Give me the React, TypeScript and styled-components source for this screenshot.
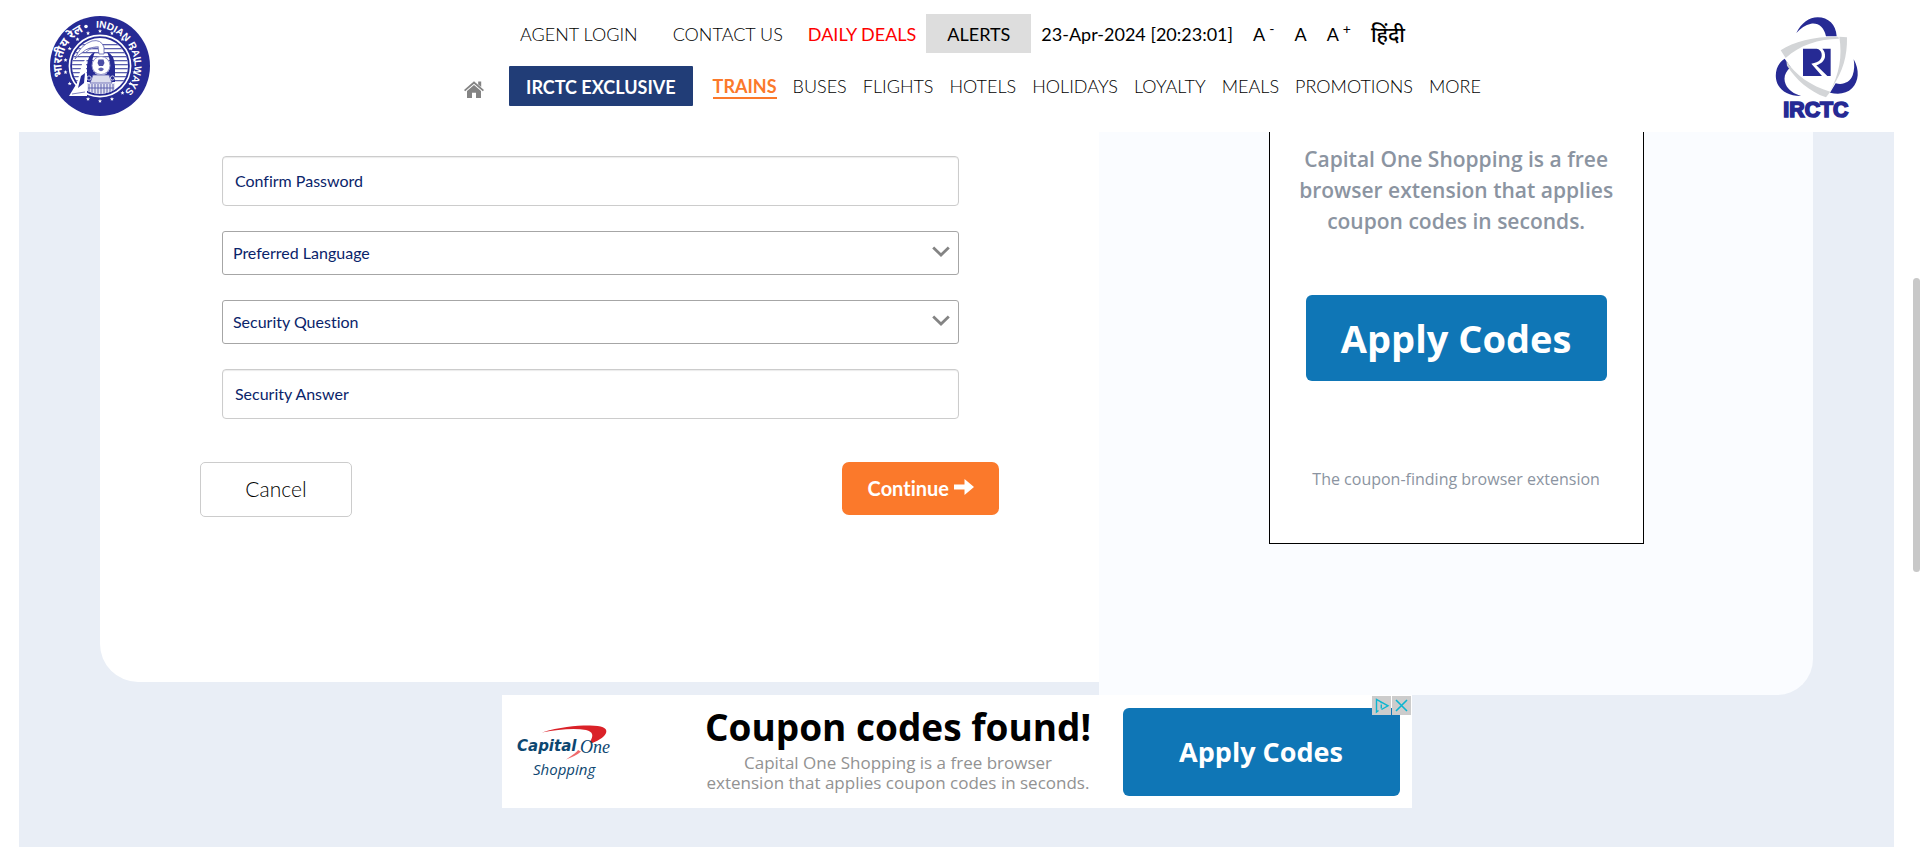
import React from "react";
import styled, { createGlobalStyle, css } from "styled-components";

const Global = createGlobalStyle`
  *, *::before, *::after { box-sizing: border-box; }
  body {
    margin: 0;
    background: #fff;
    color: #000;
    font-family: Lato, "Noto Sans", sans-serif;
    font-variant-ligatures: none;
  }
  button, input, select { font-family: inherit; font-variant-ligatures: none; }
`;

const Page = styled.div`
  display: flex;
  flex-direction: column;
  min-height: 100vh;
`;

const Header = styled.header`
  display: flex;
  align-items: flex-start;
  height: 132px;
  padding: 0 62px 0 50px;
  background: #fff;
`;

const LogoLink = styled.a`
  display: block;
  flex: none;
  padding-top: 16px;
  svg { display: block; overflow: visible; }
`;

const HeaderNav = styled.div`
  flex: 1;
  display: flex;
  flex-direction: column;
  align-items: center;
  gap: 13px;
  padding-top: 14px;
`;

const TopRow = styled.nav`
  display: flex;
  align-items: center;
  height: 39px;
  font-size: 18px;
  white-space: nowrap;
`;

const MainRow = styled.nav`
  display: flex;
  align-items: center;
  height: 40px;
  margin-left: 20px;
  font-size: 18px;
  white-space: nowrap;
`;

const TopLink = styled.a<{ $tone?: "deal" | "language" }>`
  color: #000;
  text-decoration: none;
  font-weight: 300;
  margin-right: 35px;
  ${(p) => p.$tone === "deal" && css`color: #fe0000; font-weight: 400; margin: 0 10px 0 -10px;`}
  ${(p) => p.$tone === "language" && css`font-size: 21px; line-height: 24px; font-weight: 500; margin: 0;`}
`;

const AlertButton = styled.button`
  height: 39px;
  padding: 0 21px;
  margin-right: 10px;
  border: 0;
  background: #ddd;
  color: #000;
  font-size: 18px;
`;

const Clock = styled.time`
  margin-right: 20px;
`;

const SizeButton = styled.button`
  padding: 0;
  margin-right: 20px;
  border: 0;
  background: none;
  color: #000;
  font-size: 18px;
  line-height: 20px;
  sup { font-size: 14px; line-height: 0; margin-left: 4px; }
`;

const HomeLink = styled.a`
  display: flex;
  padding-top: 7px;
  margin-right: 25px;
`;

const Exclusive = styled.a`
  height: 40px;
  padding: 0 17px;
  margin-right: 20px;
  border-radius: 1px;
  background: #213d77;
  color: #fff;
  font-weight: 700;
  line-height: 42px;
  text-decoration: none;
`;

const MenuList = styled.div`
  display: flex;
  gap: 16px;
`;

const MenuLink = styled.a<{ $active?: boolean }>`
  height: 26px;
  line-height: 26px;
  color: ${(p) => (p.$active ? "#fb792b" : "#000")};
  border-bottom: 2px solid ${(p) => (p.$active ? "#fb792b" : "transparent")};
  font-weight: ${(p) => (p.$active ? 700 : 300)};
  text-decoration: none;
`;

const Main = styled.main`
  flex: 1;
  margin: 0 26px 0 19px;
  padding-bottom: 39px;
  background: #e9eef6;
`;

const Columns = styled.div`
  display: grid;
  grid-template-columns: 7fr 5fr;
  margin: 0 81px;
`;

const FormPanel = styled.section`
  margin-bottom: 13px;
  padding: 24px 10% 0;
  border-bottom-left-radius: 38px;
  background: #fff;
`;

const Fields = styled.div`
  display: flex;
  flex-direction: column;
  gap: 25px;
  padding: 0 40px 0 22px;
`;

const SelectWrap = styled.div`
  position: relative;
`;

const TextInput = styled.input`
  display: block;
  width: 100%;
  height: 50px;
  padding: 0 12px 2px;
  border: 1px solid #ccc;
  border-radius: 4px;
  background: #fff;
  box-shadow: inset 0 1px 1px rgba(0, 0, 0, 0.08);
  color: #0a246a;
  font-size: 16px;
  &::placeholder { color: #0a246a; opacity: 1; }
`;

const SelectInput = styled.select`
  display: block;
  width: 100%;
  height: 44px;
  padding: 0 40px 2px 10px;
  appearance: none;
  border: 1px solid #a6a6a6;
  border-radius: 3px;
  background: #fff;
  color: #0a246a;
  font-size: 16px;
`;

const Chevron = styled.svg`
  position: absolute;
  right: 9px;
  top: 14px;
  pointer-events: none;
`;

const Actions = styled.div`
  display: flex;
  justify-content: space-between;
  align-items: flex-start;
  margin-top: 43px;
`;

const CancelButton = styled.button`
  width: 152px;
  height: 55px;
  padding: 0 0 2px;
  border: 1px solid #ccc;
  border-radius: 5px;
  background: #fff;
  color: #000;
  font-size: 21px;
  font-weight: 300;
`;

const ContinueButton = styled.button`
  display: flex;
  align-items: center;
  justify-content: center;
  gap: 5px;
  width: 157px;
  height: 53px;
  padding: 0 0 2px;
  border: 0;
  border-radius: 7px;
  background: #fb792b;
  color: #fff;
  font-size: 20px;
  font-weight: 700;
`;

const SidePanel = styled.aside`
  padding-bottom: 151px;
  border-bottom-right-radius: 36px;
  background: #fafcff;
`;

const TallAd = styled.section`
  display: flex;
  flex-direction: column;
  align-items: center;
  width: 375px;
  height: 412px;
  margin: 0 auto;
  padding-top: 12px;
  border: 1px solid #000;
  border-top: 0;
  background: #fff;
  font-family: "Open Sans", sans-serif;
  color: #8b94a1;
  text-align: center;
`;

const TallCopy = styled.p`
  margin: 0 0 58px;
  font-size: 21px;
  line-height: 31px;
  font-weight: 600;
`;

const ApplyButton = styled.button<{ $wide?: boolean }>`
  flex: none;
  width: ${(p) => (p.$wide ? 301 : 277)}px;
  height: ${(p) => (p.$wide ? 86 : 88)}px;
  padding: 0;
  border: 0;
  border-radius: 6px;
  background: #0f76b6;
  color: #fff;
  font-family: "Open Sans", sans-serif;
  font-size: ${(p) => (p.$wide ? 38 : 27)}px;
  font-weight: 700;
`;

const TallNote = styled.p`
  margin: 84px 0 0;
  font-size: 16px;
  line-height: 28px;
`;

const BannerAd = styled.section`
  position: relative;
  display: flex;
  align-items: center;
  width: 910px;
  height: 113px;
  margin: 0 auto;
  padding: 0 12px 0 14px;
  background: #fff;
  font-family: "Open Sans", sans-serif;
`;

const BannerLogo = styled.div`
  width: 158px;
  svg { display: block; }
`;

const BannerCopy = styled.div`
  flex: 1;
  display: flex;
  flex-direction: column;
  align-items: center;
  gap: 4px;
  padding-bottom: 5px;
  white-space: nowrap;
`;

const BannerTitle = styled.h2`
  margin: 0;
  font-size: 37px;
  line-height: 44px;
  font-weight: 700;
`;

const BannerText = styled.p`
  margin: 0;
  color: #929292;
  font-size: 17px;
  line-height: 20px;
  font-weight: 500;
  text-align: center;
`;

const AdChoices = styled.div`
  position: absolute;
  top: 1px;
  right: 1px;
  display: flex;
  gap: 1px;
`;

const AdIconButton = styled.button`
  display: block;
  width: 19px;
  height: 19px;
  padding: 0;
  border: 0;
  background: #ccc;
  svg { display: block; }
`;

const ScrollThumb = styled.div`
  position: fixed;
  top: 278px;
  right: 0;
  width: 7px;
  height: 294px;
  border-radius: 4px;
  background: #c8c8c8;
`;

const starAngles = Array.from({ length: 18 }, (_, i) => i * 20);

const RailwaysLogo = () => (
  <svg width="100" height="100" viewBox="0 0 100 100" role="img" aria-label="Indian Railways">
    <defs>
      <path id="ringRight" d="M46 11.7 A38.5 38.5 0 0 1 50 88.5" />
      <path id="ringLeft" d="M13 60.6 A38.5 38.5 0 0 1 50 11.5" />
      <clipPath id="disc"><circle cx="50" cy="50" r="28" /></clipPath>
    </defs>
    <circle cx="50" cy="50" r="50" fill="#262a94" />
    {starAngles.map((a) => (
      <path
        key={a}
        d="M0 -2 L0.6 -0.6 L2 -0.5 L0.9 0.5 L1.2 1.8 L0 1.1 L-1.2 1.8 L-0.9 0.5 L-2 -0.5 L-0.6 -0.6Z"
        transform={`translate(${50 + 35 * Math.sin((a * Math.PI) / 180)} ${50 - 35 * Math.cos((a * Math.PI) / 180)})`}
        fill="#fff"
      />
    ))}
    <circle cx="50" cy="50" r="30.6" fill="#262a94" stroke="#fff" strokeWidth="1.6" />
    <circle cx="50" cy="50" r="28" fill="#fff" />
    <g clipPath="url(#disc)">
      {[28, 32, 36, 40, 44, 48, 52, 56, 60, 64].map((y) => (
        <rect key={y} x="22" y={y} width="56" height="1.3" fill="#5d60ae" />
      ))}
      <path d="M37 66 V50 Q38 38 45 36 Q42 42 42 50 Q43 58 48 59 H54 Q59 58 60 50 Q60 42 57 36 Q64 38 65 50 V66Z" fill="#262a94" />
      <path d="M37 67 H65 V78 H37Z" fill="#e4e5f3" />
      <path d="M39 68V78M42 68V78M45 68V78M48 68V78M51 68V78M54 68V78M57 68V78M60 68V78M63 68V78" stroke="#5d60ae" strokeWidth="1" />
      <path d="M38 72H64" stroke="#5d60ae" strokeWidth="1" />
      <path d="M43 59 H59 L62 67 H40Z" fill="#dcdded" stroke="#5d60ae" strokeWidth="0.8" />
    </g>
    <circle cx="51" cy="49.5" r="9" fill="#fff" stroke="#8e90c8" strokeWidth="1" />
    <path d="M48.5 43.5 H53.5 L54.5 47 L53 50 H49 L47.5 47Z" fill="#4b4ea6" />
    <path d="M48 53 Q51 50 54 53 Q51 57.5 48 53Z" fill="#5d60ae" />
    <circle cx="39" cy="62" r="2.1" fill="#262a94" stroke="#fff" strokeWidth="0.7" />
    <circle cx="62.5" cy="62" r="2.1" fill="#262a94" stroke="#fff" strokeWidth="0.7" />
    <path d="M25 43 Q30 29 42 25 Q51 23 54 31 L54 38 H49 L48 31 Q38 31 33 36 Q28 39 25 43Z" fill="#fff" stroke="#5d60ae" strokeWidth="0.8" />
    <path d="M36 36 Q44 30 49 31" fill="none" stroke="#8e90c8" strokeWidth="1" />
    <path d="M19 80 L27 67 L32 48 L37 41 Q35 51 37 60 L37 80Z" fill="#fff" />
    <path d="M31 60 L35 57 L34 67 L28 72Z" fill="#262a94" />
    <path d="M22 78 L35 76" stroke="#5d60ae" strokeWidth="0.8" />
    <circle cx="36" cy="10.5" r="1.8" fill="#fff" />
    <text fill="#fff" fontFamily="Liberation Sans, sans-serif" fontWeight="700" fontSize="10">
      <textPath href="#ringRight">INDIAN RAILWAYS</textPath>
    </text>
    <text fill="#fff" fontFamily="Noto Sans, sans-serif" fontWeight="700" fontSize="12">
      <textPath href="#ringLeft">भारतीय रेल</textPath>
    </text>
  </svg>
);

const IrctcLogo = () => (
  <svg width="83" height="102" viewBox="165 50 249 306" role="img" aria-label="IRCTC">
    <g fill="#262a94">
      <path d="M229 101 C245 70 267 54 293 54 C325 54 348 76 350 111 H318 C312 82 295 70 273 73 C256 76 242 86 229 101Z" />
      <path d="M194 178 L212 204 C195 218 189 236 197 255 C205 273 222 284 243 290 C204 291 173 271 168 238 C165 214 173 192 194 178Z" />
      <path d="M401 180 C419 212 417 246 396 267 C380 283 356 287 330 280 L347 252 C369 258 390 249 398 228 C403 213 404 197 401 180Z" />
      <path d="M249 148 H290 C307 151 309 171 300 182 C295 188 286 191 274 193 L306 230 H249Z" />
      <path d="M307 148 H332 V230 H322 L289 198 C304 193 313 184 315 173 C316 162 313 154 307 148Z" />
    </g>
    <g fill="#d3d5d7">
      <path d="M182 153 C222 125 285 111 355 112 L357 118 C296 119 238 137 197 176Z" />
      <path d="M358 112 L381 114 C382 171 369 216 336 265 L328 280 C359 222 367 172 358 112Z" />
      <path d="M199 184 C226 227 272 259 331 277 L318 294 C267 276 227 240 201 199Z" />
    </g>
    <text x="190" y="353" fill="#262a94" stroke="#262a94" strokeWidth="5" fontFamily="Liberation Sans, sans-serif" fontWeight="700" fontSize="64">IRCTC</text>
  </svg>
);

const CapitalOneLogo = () => (
  <svg width="96" height="64" viewBox="0 -6 96 64" role="img" aria-label="Capital One Shopping">
    <path d="M26 6.4 C44 1 60 -0.6 74 -0.5 C86 -0.3 91 2 90.3 6 C89.6 10 84 14 75.7 17.2 L74 15.5 C78 10 77 5.5 70 4 C58 2 42 3.5 26 6.4Z" fill="#da2128" />
    <path d="M50 33.4 C55 30 60 27 62 24 L65 25.6 C61 29 56 31.6 50 33.4Z" fill="#ef6a6c" />
    <text x="1" y="25" fill="#0d4771" fontFamily="DejaVu Sans, sans-serif" fontStyle="italic" fontWeight="700" fontSize="15">Capital</text>
    <text x="64" y="27" fill="#0d4771" fontFamily="Liberation Serif, serif" fontStyle="italic" fontSize="18">One</text>
    <text x="17" y="49" fill="#0d4771" fontFamily="Open Sans, sans-serif" fontStyle="italic" fontWeight="500" fontSize="15">Shopping</text>
  </svg>
);

const menu = ["TRAINS", "BUSES", "FLIGHTS", "HOTELS", "HOLIDAYS", "LOYALTY", "MEALS", "PROMOTIONS", "MORE"];

const SelectField = ({ label }: { label: string }) => (
  <SelectWrap>
    <SelectInput aria-label={label} defaultValue="">
      <option value="">{label}</option>
    </SelectInput>
    <Chevron width="18" height="14" viewBox="0 0 18 14" aria-hidden="true">
      <path d="M1.2 2.5 L9 10 L16.8 2.5" fill="none" stroke="#848484" strokeWidth="2.8" />
    </Chevron>
  </SelectWrap>
);

const TextField = ({ label, type = "text" }: { label: string; type?: string }) => (
  <TextInput type={type} aria-label={label} placeholder={label} />
);

export default function App() {
  return (
    <Page>
      <Global />
      <Header>
        <LogoLink href="#"><RailwaysLogo /></LogoLink>
        <HeaderNav>
          <TopRow>
            <TopLink href="#">AGENT LOGIN</TopLink>
            <TopLink href="#">CONTACT US</TopLink>
            <TopLink href="#" $tone="deal">DAILY DEALS</TopLink>
            <AlertButton type="button">ALERTS</AlertButton>
            <Clock>23-Apr-2024 [20:23:01]</Clock>
            <SizeButton type="button">A<sup>-</sup></SizeButton>
            <SizeButton type="button">A</SizeButton>
            <SizeButton type="button">A<sup>+</sup></SizeButton>
            <TopLink href="#" $tone="language" lang="hi">हिंदी</TopLink>
          </TopRow>
          <MainRow>
            <HomeLink href="#" aria-label="Home">
              <svg width="20" height="17" viewBox="0 0 20 17" fill="#848484">
                <path d="M10 0.3 L20 9 L18.8 10.2 L10 2.7 L1.2 10.2 L0 9Z" />
                <path d="M14.2 0.6 H17.2 V6 L14.2 3.4Z" />
                <path d="M10 4 L17 10 V17 H12 V11.7 H8 V17 H3 V10Z" />
              </svg>
            </HomeLink>
            <Exclusive href="#">IRCTC EXCLUSIVE</Exclusive>
            <MenuList>
              {menu.map((item, i) => (
                <MenuLink key={item} href="#" $active={i === 0}>{item}</MenuLink>
              ))}
            </MenuList>
          </MainRow>
        </HeaderNav>
        <LogoLink href="#"><IrctcLogo /></LogoLink>
      </Header>
      <Main>
        <Columns>
          <FormPanel>
            <form>
              <Fields>
                <TextField label="Confirm Password" type="password" />
                <SelectField label="Preferred Language" />
                <SelectField label="Security Question" />
                <TextField label="Security Answer" />
              </Fields>
              <Actions>
                <CancelButton type="button">Cancel</CancelButton>
                <ContinueButton type="button">
                  Continue
                  <svg width="20" height="17" viewBox="0 0 20 17" fill="#fff" aria-hidden="true">
                    <path d="M0 5.6 H10.5 V0 L20 8 L10.5 16 V10.6 H0Z" />
                  </svg>
                </ContinueButton>
              </Actions>
            </form>
          </FormPanel>
          <SidePanel>
            <TallAd>
              <TallCopy>
                Capital One Shopping is a free<br />browser extension that applies<br />coupon codes in seconds.
              </TallCopy>
              <ApplyButton type="button" $wide>Apply Codes</ApplyButton>
              <TallNote>The coupon-finding browser extension</TallNote>
            </TallAd>
          </SidePanel>
        </Columns>
        <BannerAd>
          <BannerLogo><CapitalOneLogo /></BannerLogo>
          <BannerCopy>
            <BannerTitle>Coupon codes found!</BannerTitle>
            <BannerText>
              Capital One Shopping is a free browser<br />extension that applies coupon codes in seconds.
            </BannerText>
          </BannerCopy>
          <ApplyButton type="button">Apply Codes</ApplyButton>
          <AdChoices>
            <AdIconButton type="button" aria-label="Ad choices">
              <svg width="19" height="19" viewBox="0 0 19 19" fill="none" stroke="#0bb5d0" strokeWidth="1.4">
                <path d="M6.5 14.5 L4.5 16 V3.5 L16 9.8 L9.5 13.5" />
                <path d="M9.3 8.5 V12.5 M9.3 6 V7.3" />
              </svg>
            </AdIconButton>
            <AdIconButton type="button" aria-label="Close ad">
              <svg width="19" height="19" viewBox="0 0 19 19" stroke="#0bb5d0" strokeWidth="1.6">
                <path d="M4 4 L15 15 M15 4 L4 15" />
              </svg>
            </AdIconButton>
          </AdChoices>
        </BannerAd>
      </Main>
      <ScrollThumb />
    </Page>
  );
}
